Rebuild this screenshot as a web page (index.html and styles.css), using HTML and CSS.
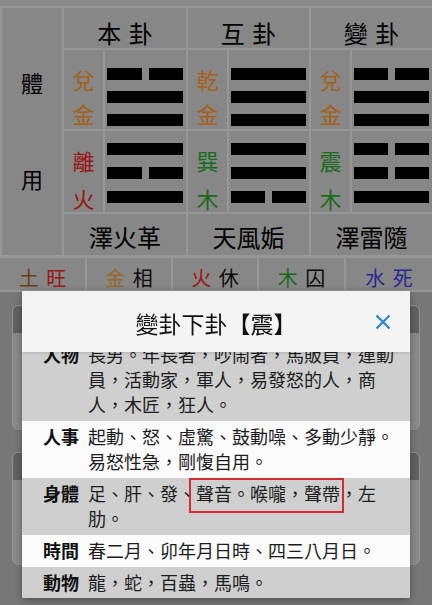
FILE: index.html
```html
<!DOCTYPE html>
<html lang="zh-Hant">
<head>
<meta charset="utf-8">
<title>變卦下卦</title>
<link rel="stylesheet" href="styles.css">
</head>
<body>
<div class="page">
  <div class="top-strip">
    <span class="ts-a">乙巳年</span><span class="ts-b">三月初</span><span class="ts-c">午時 動爻五爻</span>
  </div>

  <div class="gua-table">
    <div class="side-cell"><span>體</span><span class="yong">用</span></div>

    <div class="head-cell">本 卦</div>
    <div class="head-cell">互 卦</div>
    <div class="head-cell">變 卦</div>

    <!-- 體 row -->
    <div class="name-cell ti"><span class="c-metal">兌</span><span class="c-metal">金</span></div>
    <div class="lines-cell ti">
      <div class="yao"><i></i><i></i></div>
      <div class="yao"><i></i></div>
      <div class="yao"><i></i></div>
    </div>
    <div class="name-cell ti"><span class="c-metal">乾</span><span class="c-metal">金</span></div>
    <div class="lines-cell ti">
      <div class="yao"><i></i></div>
      <div class="yao"><i></i></div>
      <div class="yao"><i></i></div>
    </div>
    <div class="name-cell ti"><span class="c-metal">兌</span><span class="c-metal">金</span></div>
    <div class="lines-cell ti">
      <div class="yao"><i></i><i></i></div>
      <div class="yao"><i></i></div>
      <div class="yao"><i></i></div>
    </div>

    <!-- 用 row -->
    <div class="name-cell yo"><span class="c-fire">離</span><span class="c-fire">火</span></div>
    <div class="lines-cell yo">
      <div class="yao"><i></i></div>
      <div class="yao"><i></i><i></i></div>
      <div class="yao"><i></i></div>
    </div>
    <div class="name-cell yo"><span class="c-wood">巽</span><span class="c-wood">木</span></div>
    <div class="lines-cell yo">
      <div class="yao"><i></i></div>
      <div class="yao"><i></i></div>
      <div class="yao"><i></i><i></i></div>
    </div>
    <div class="name-cell yo"><span class="c-wood">震</span><span class="c-wood">木</span></div>
    <div class="lines-cell yo">
      <div class="yao"><i></i><i></i></div>
      <div class="yao"><i></i><i></i></div>
      <div class="yao"><i></i></div>
    </div>

    <div class="gua-name">澤火革</div>
    <div class="gua-name">天風姤</div>
    <div class="gua-name">澤雷隨</div>
  </div>

  <div class="wuxing">
    <div class="wx"><span class="c-earth">土</span> <span class="c-fire">旺</span></div>
    <div class="wx"><span class="c-gold">金</span> <span>相</span></div>
    <div class="wx"><span class="c-fire">火</span> <span>休</span></div>
    <div class="wx"><span class="c-wood">木</span> <span>囚</span></div>
    <div class="wx"><span class="c-water">水</span> <span class="c-water">死</span></div>
  </div>

  <div class="cards">
    <div class="card card-1"><div class="card-head"></div></div>
    <div class="card card-2"><div class="card-head"></div></div>
  </div>
</div>

<div class="overlay"></div>

<div class="modal">
  <div class="modal-head">
    <div class="modal-title">變卦下卦【震】</div>
    <button class="close" aria-label="關閉">
      <svg viewBox="0 0 16 16" width="16" height="16"><path d="M1.5 1.5 L14.5 14.5 M14.5 1.5 L1.5 14.5" stroke="#2f88c8" stroke-width="2.3" fill="none" stroke-linecap="butt"/></svg>
    </button>
  </div>
  <div class="modal-body">
    <div class="list">
      <div class="row alt">
        <div class="label">人物</div>
        <div class="text">長男。年長者，吵鬧者，馬販員，運動員，活動家，軍人，易發怒的人，商人，木匠，狂人。</div>
      </div>
      <div class="row">
        <div class="label">人事</div>
        <div class="text">起動、怒、虛驚、鼓動噪、多動少靜。易怒性急，剛愎自用。</div>
      </div>
      <div class="row alt">
        <div class="label">身體</div>
        <div class="text">足、肝、發、<span class="mark">聲音。喉嚨，聲帶</span>，左肋。</div>
      </div>
      <div class="row">
        <div class="label">時間</div>
        <div class="text">春二月、卯年月日時、四三八月日。</div>
      </div>
      <div class="row alt">
        <div class="label">動物</div>
        <div class="text">龍，蛇，百蟲，馬鳴。</div>
      </div>
    </div>
  </div>
</div>
</body>
</html>
```

FILE: styles.css
```css
html, body {
  margin: 0;
  padding: 0;
}
body {
  width: 432px;
  height: 605px;
  overflow: hidden;
  background: #ababab;
  font-family: "Noto Sans CJK TC", "Noto Sans CJK SC", sans-serif;
  color: #000;
}

.page {
  width: 432px;
}

/* remnants of the previous line */
.top-strip {
  height: 6px;
  overflow: hidden;
  background: #c4c4c4;
  font-size: 15px;
  line-height: 20px;
  white-space: nowrap;
  display: flex;
}
.top-strip span {
  margin-top: -19px;
}
.ts-a { width: 87px; color: #111; }
.ts-b { width: 193px; color: #111; }
.ts-c { color: #d22; }

/* hexagram table */
.gua-table {
  display: grid;
  grid-template-columns: 60px 39px 81px 39px 80px 39px 80px;
  grid-template-rows: 40px 79px 81px 41px;
  gap: 2px;
  padding: 2px 0 2px 2px;
  background: #d8d8d8;
}
.gua-table > div {
  background: #c2c2c2;
}
.side-cell {
  grid-row: 1 / 5;
  display: flex;
  flex-direction: column;
  align-items: center;
  font-size: 22px;
  line-height: 30px;
  padding-top: 59px;
}
.side-cell .yong {
  margin-top: 66px;
}
.head-cell {
  grid-column: span 2;
  display: flex;
  align-items: center;
  justify-content: center;
  font-size: 24px;
  word-spacing: 2px;
  padding-top: 8px;
}
.name-cell {
  display: flex;
  flex-direction: column;
  align-items: center;
  font-size: 22px;
}
.name-cell.ti {
  line-height: 34px;
  padding-top: 12px;
}
.name-cell.yo {
  line-height: 38px;
  padding-top: 10px;
}
.lines-cell {
  display: flex;
  flex-direction: column;
  padding: 0 3px 0 2px;
}
.lines-cell.ti {
  gap: 11px;
  padding-top: 18px;
}
.lines-cell.yo {
  gap: 12px;
  padding-top: 12px;
}
.yao {
  height: 12px;
  display: flex;
  gap: 7px;
}
.yao i {
  flex: 1;
  background: #000;
}
.gua-name {
  grid-column: span 2;
  display: flex;
  align-items: center;
  justify-content: center;
  font-size: 24px;
  padding-top: 3px;
}

.c-metal { color: #ec8a26; }
.c-fire { color: #de2222; }
.c-wood { color: #289a28; }
.c-earth { color: #9c5a17; }
.c-gold { color: #dc963c; }
.c-water { color: #3a3ad0; }

/* wu xing strength row */
.wuxing {
  display: grid;
  grid-template-columns: 85px 84px 84px 85px 86px;
  gap: 2px;
  padding: 1px 0 2px 0;
  background: #d8d8d8;
}
.wx {
  background: #c2c2c2;
  height: 24px;
  padding-top: 8px;
  text-align: center;
  font-size: 20px;
  line-height: 24px;
  word-spacing: 3px;
  color: #111;
}

/* cards under the dialog */
.cards {
  display: flex;
  flex-direction: column;
  gap: 22px;
  padding: 13px 12px 0 12px;
}
.card {
  background: #c6c6c6;
  border: 1px solid #d2d2d2;
  border-radius: 6px;
  overflow: hidden;
}
.card-1 { height: 123px; }
.card-2 { height: 111px; }
.card-head {
  height: 27px;
  background: #8c8c8c;
}

/* dimming layer */
.overlay {
  position: fixed;
  inset: 0;
  background: rgba(0, 0, 0, 0.3);
}

/* dialog */
.modal {
  position: fixed;
  left: 22px;
  top: 291px;
  width: 388px;
  height: 307px;
  background: #fbfbfb;
  display: flex;
  flex-direction: column;
  overflow: hidden;
  border-radius: 2px;
  box-shadow: 0 2px 8px rgba(0, 0, 0, 0.35);
}
.modal-head {
  flex: none;
  height: 61px;
  display: grid;
  grid-template-columns: 1fr auto 1fr;
  align-items: center;
  background: #f4f4f4;
  box-shadow: 0 1px 3px rgba(0, 0, 0, 0.14);
  position: relative;
  z-index: 1;
}
.modal-title {
  grid-column: 2;
  font-size: 23px;
  line-height: 30px;
  padding-top: 2px;
  color: #111;
}
.close {
  grid-column: 3;
  justify-self: end;
  margin-right: 19px;
  width: 16px;
  height: 16px;
  padding: 0;
  border: 0;
  background: none;
  display: flex;
}

.modal-body {
  flex: 1;
  overflow: hidden;
}
.list {
  margin-top: -13px;
}
.row {
  display: grid;
  grid-template-columns: 36px 312px;
  column-gap: 9px;
  padding: 3px 0 4px 21px;
  font-size: 18px;
  line-height: 25px;
  color: #1c1c1c;
  background: #fbfbfb;
}
.row.alt {
  background: #cfcfcf;
}
.label {
  font-weight: 700;
  color: #111;
}
.mark {
  position: relative;
}
.mark::after {
  content: "";
  position: absolute;
  left: -7px;
  right: -4px;
  top: -2px;
  bottom: -7px;
  border: 2px solid #d42a32;
}
```
